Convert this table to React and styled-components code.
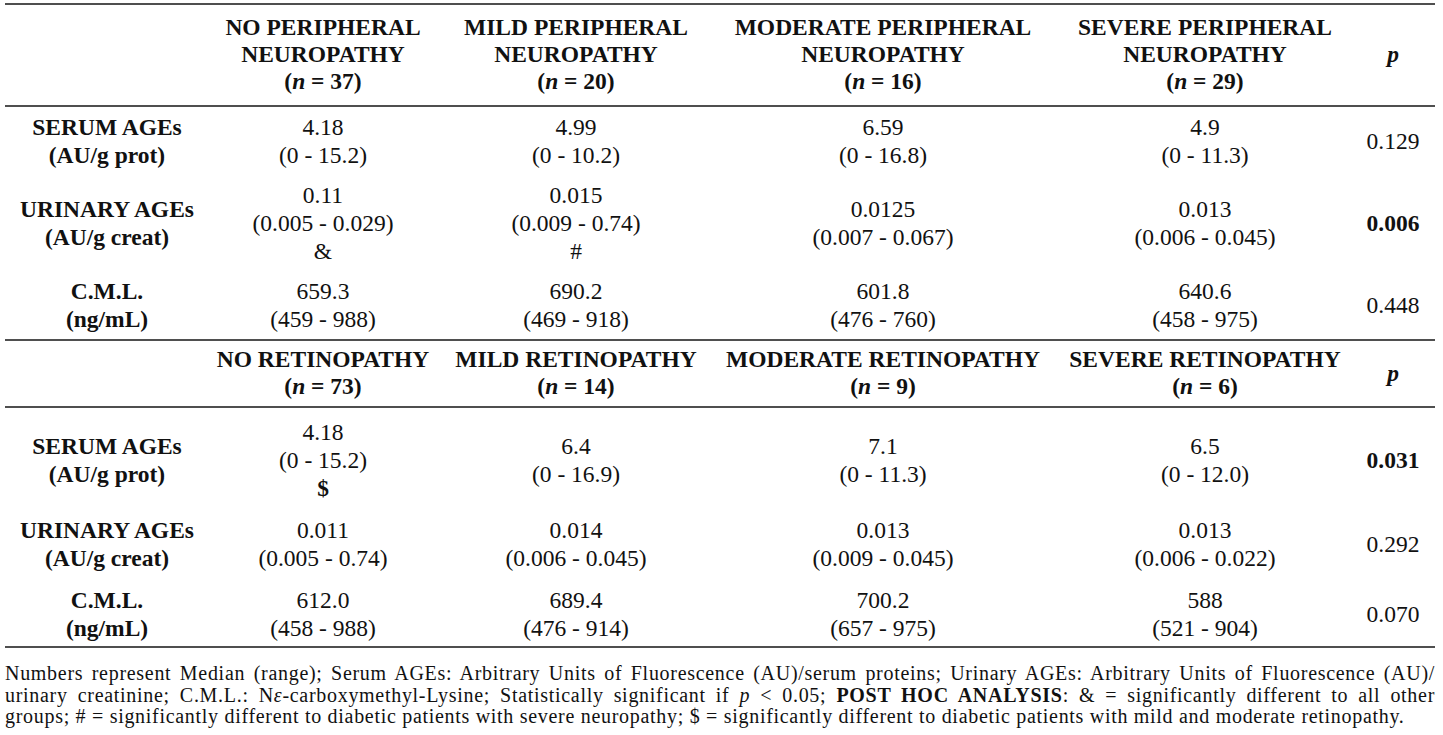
import styled, { createGlobalStyle } from "styled-components";

const GlobalStyle = createGlobalStyle`
  body {
    margin: 0;
    background: #ffffff;
  }
`;

const neuropathy = {
  groups: [
    { title: ["NO PERIPHERAL", "NEUROPATHY"], n: "37" },
    { title: ["MILD PERIPHERAL", "NEUROPATHY"], n: "20" },
    { title: ["MODERATE PERIPHERAL", "NEUROPATHY"], n: "16" },
    { title: ["SEVERE PERIPHERAL", "NEUROPATHY"], n: "29" },
  ],
  rows: [
    {
      label: ["SERUM AGEs", "(AU/g prot)"],
      cells: [
        ["4.18", "(0 - 15.2)"],
        ["4.99", "(0 - 10.2)"],
        ["6.59", "(0 - 16.8)"],
        ["4.9", "(0 - 11.3)"],
      ],
      p: "0.129",
    },
    {
      label: ["URINARY AGEs", "(AU/g creat)"],
      cells: [
        ["0.11", "(0.005 - 0.029)", "&"],
        ["0.015", "(0.009 - 0.74)", "#"],
        ["0.0125", "(0.007 - 0.067)"],
        ["0.013", "(0.006 - 0.045)"],
      ],
      p: "0.006",
      significant: true,
    },
    {
      label: ["C.M.L.", "(ng/mL)"],
      cells: [
        ["659.3", "(459 - 988)"],
        ["690.2", "(469 - 918)"],
        ["601.8", "(476 - 760)"],
        ["640.6", "(458 - 975)"],
      ],
      p: "0.448",
    },
  ],
};

const retinopathy = {
  groups: [
    { title: ["NO RETINOPATHY"], n: "73" },
    { title: ["MILD RETINOPATHY"], n: "14" },
    { title: ["MODERATE RETINOPATHY"], n: "9" },
    { title: ["SEVERE RETINOPATHY"], n: "6" },
  ],
  rows: [
    {
      label: ["SERUM AGEs", "(AU/g prot)"],
      cells: [
        ["4.18", "(0 - 15.2)", { mark: "$" }],
        ["6.4", "(0 - 16.9)"],
        ["7.1", "(0 - 11.3)"],
        ["6.5", "(0 - 12.0)"],
      ],
      p: "0.031",
      significant: true,
    },
    {
      label: ["URINARY AGEs", "(AU/g creat)"],
      cells: [
        ["0.011", "(0.005 - 0.74)"],
        ["0.014", "(0.006 - 0.045)"],
        ["0.013", "(0.009 - 0.045)"],
        ["0.013", "(0.006 - 0.022)"],
      ],
      p: "0.292",
    },
    {
      label: ["C.M.L.", "(ng/mL)"],
      cells: [
        ["612.0", "(458 - 988)"],
        ["689.4", "(476 - 914)"],
        ["700.2", "(657 - 975)"],
        ["588", "(521 - 904)"],
      ],
      p: "0.070",
    },
  ],
};

function Section({ data, divided, spacious }) {
  return (
    <>
      <HeaderRow $divided={divided} $tall={data.groups[0].title.length > 1}>
        <Cell />
        {data.groups.map((g, i) => (
          <HeadCell key={i}>
            {g.title.map((t) => (
              <Line key={t}>{t}</Line>
            ))}
            <Line>
              (<i>n</i> = {g.n})
            </Line>
          </HeadCell>
        ))}
        <PHead>p</PHead>
      </HeaderRow>
      {data.rows.map((r, i) => (
        <DataRow key={i} $spacious={spacious}>
          <Label>
            {r.label.map((l) => (
              <Line key={l}>{l}</Line>
            ))}
          </Label>
          {r.cells.map((c, j) => (
            <Cell key={j}>
              {c.map((v, k) =>
                typeof v === "string" ? (
                  <Line key={k}>{v}</Line>
                ) : (
                  <Line key={k}>
                    <b>{v.mark}</b>
                  </Line>
                )
              )}
            </Cell>
          ))}
          <PCell $bold={r.significant}>{r.p}</PCell>
        </DataRow>
      ))}
    </>
  );
}

export default function App() {
  return (
    <Page>
      <GlobalStyle />
      <Table>
        <Section data={neuropathy} />
        <Section data={retinopathy} divided spacious />
      </Table>
      <Note>
        <NoteLine $justify>
          Numbers represent Median (range); Serum AGEs: Arbitrary Units of
          Fluorescence (AU)/serum proteins; Urinary AGEs: Arbitrary Units of
          Fluorescence (AU)/
        </NoteLine>
        <NoteLine $justify>
          urinary creatinine; C.M.L.: N<i>ε</i>-carboxymethyl-Lysine;
          Statistically significant if <i>p</i> &lt; 0.05;{" "}
          <b>POST HOC ANALYSIS</b>: &amp; = significantly different to all
          other
        </NoteLine>
        <NoteLine>
          groups; # = significantly different to diabetic patients with severe
          neuropathy; $ = significantly different to diabetic patients with
          mild and moderate retinopathy.
        </NoteLine>
      </Note>
    </Page>
  );
}

const Page = styled.div`
  width: 1430px;
  padding: 3px 0 0 5px;
  font-family: "Liberation Serif", "Times New Roman", serif;
  color: #111111;
`;

const Table = styled.div`
  border-top: 2px solid #4f4f4f;
  border-bottom: 2px solid #4f4f4f;
`;

const Grid = styled.div`
  display: grid;
  grid-template-columns: 204px 228px 278px 336px 308px 1fr;
  align-items: center;
  font-size: 23.5px;
`;

const HeaderRow = styled(Grid)`
  font-weight: bold;
  line-height: 27px;
  padding: ${(p) => (p.$tall ? "9px 0 10px" : "5px 0 6px")};
  border-bottom: 2px solid #4f4f4f;
  border-top: ${(p) => (p.$divided ? "2px solid #4f4f4f" : "none")};
`;

const DataRow = styled(Grid)`
  line-height: 28px;
  padding: ${(p) => (p.$spacious ? "10px 0 4px" : "6px 0 6px")};
`;

const Cell = styled.div`
  display: flex;
  flex-direction: column;
  align-items: center;
  white-space: nowrap;
`;

const HeadCell = styled(Cell)``;

const Label = styled(Cell)`
  font-weight: bold;
`;

const Line = styled.span`
  display: block;
`;

const PHead = styled.div`
  font-style: italic;
  text-align: center;
  padding-right: 8px;
`;

const PCell = styled.div`
  text-align: center;
  padding-right: 8px;
  font-weight: ${(p) => (p.$bold ? "bold" : "normal")};
`;

const Note = styled.div`
  padding-top: 15px;
  font-size: 20px;
  line-height: 21.5px;
  letter-spacing: 0.7px;
`;

const NoteLine = styled.div`
  text-align: ${(p) => (p.$justify ? "justify" : "left")};
  text-align-last: ${(p) => (p.$justify ? "justify" : "left")};
  white-space: normal;
`;
